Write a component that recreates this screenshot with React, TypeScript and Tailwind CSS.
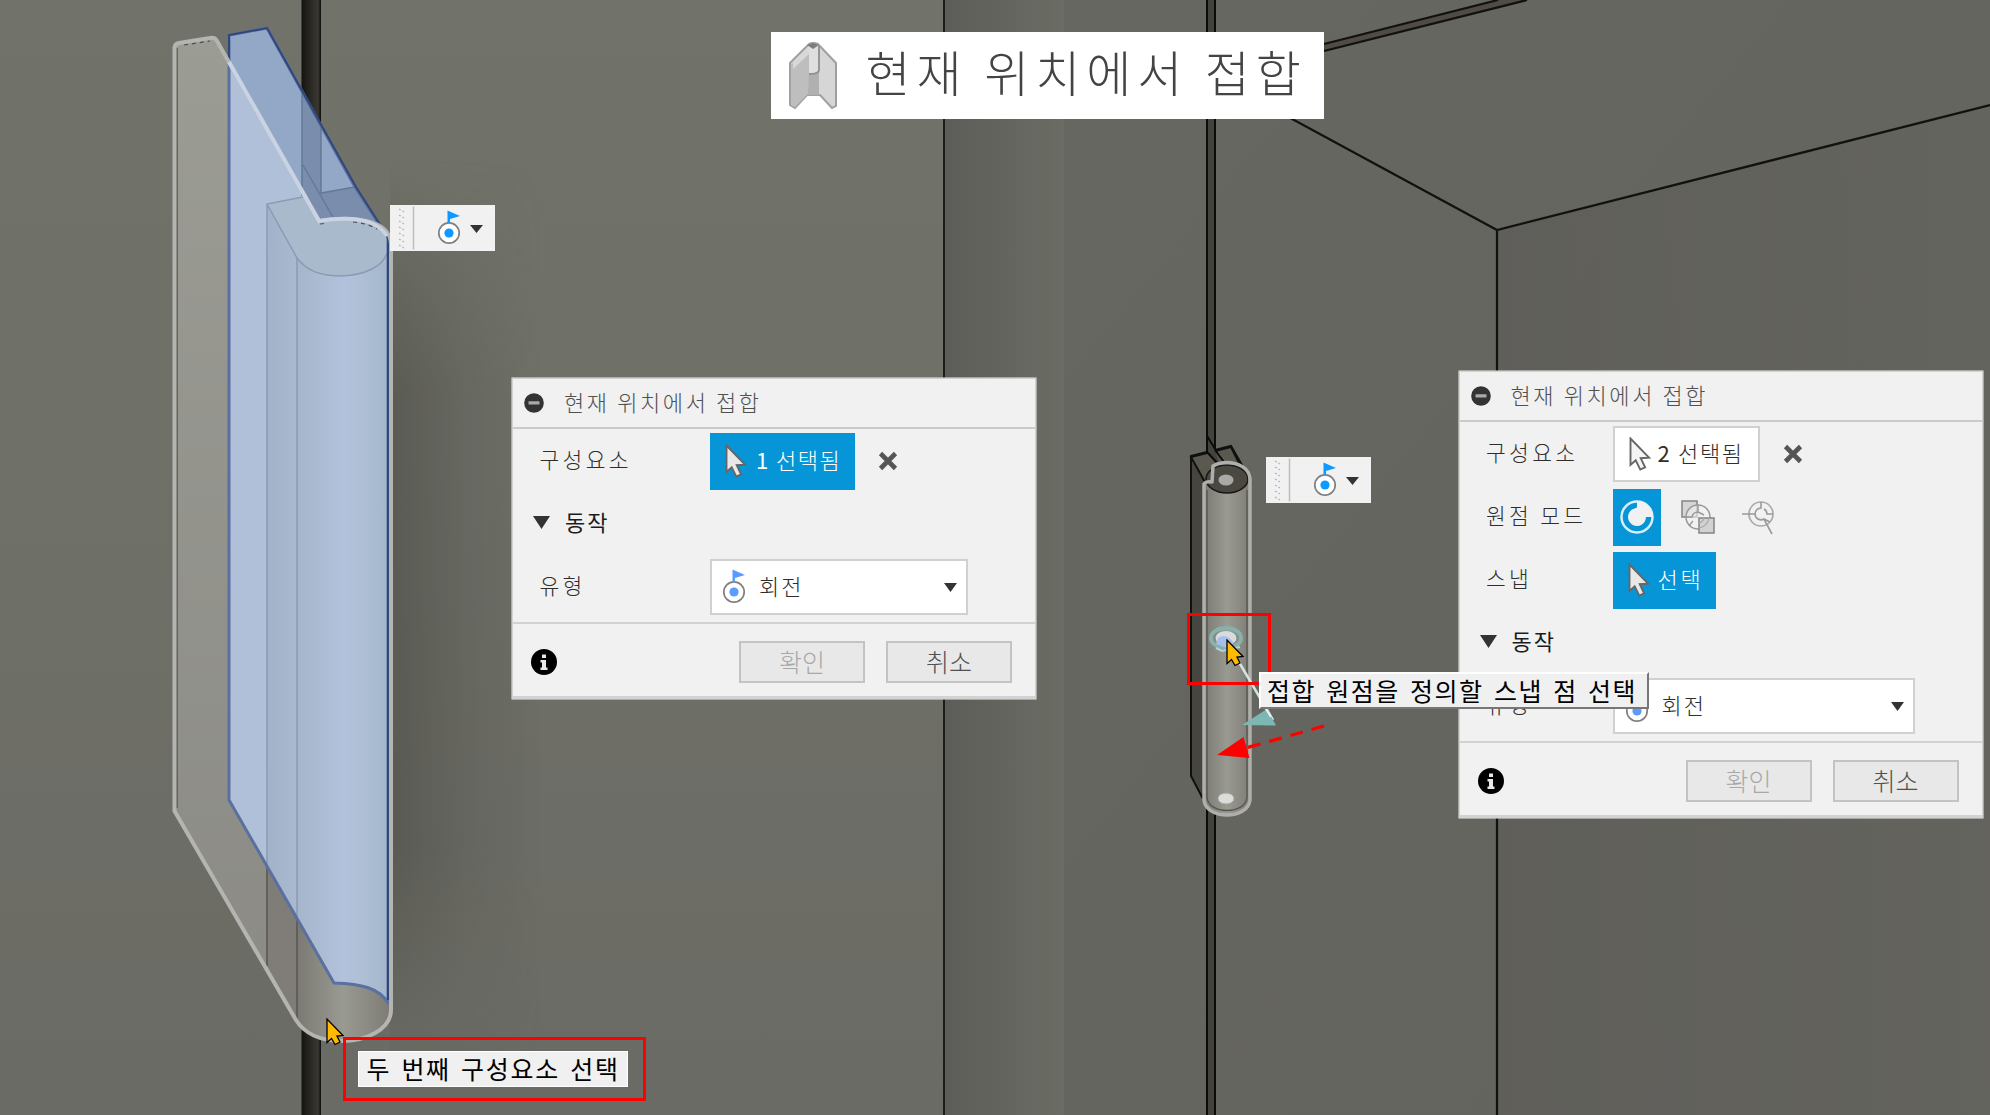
import type { ReactNode } from 'react';

const FONT = "font-['Noto_Sans_CJK_KR','Noto_Sans_CJK_SC',sans-serif]";

function SelectArrow({ fill }: { fill: string }) {
  return (
    <svg width="22" height="34" viewBox="0 0 22 34" className="shrink-0">
      <path d="M1.5 1.5V28l5.2-4.6 4.6 9.2 4.8-2.2-4.4-9.2 8.3-.6Z" fill={fill} stroke="#666" strokeWidth="1.9" />
    </svg>
  );
}

function YellowCursor() {
  return <path d="M0 0V23.500L4.500 19.500L8 25.500L13 23L10 17L16 16.500Z" fill="#ffba00" stroke="#000" strokeWidth="1.300" />;
}

function RevoluteIcon({ flag }: { flag: string }) {
  return (
    <svg width="24" height="36" viewBox="0 0 24 36" className="shrink-0">
      <circle cx="12" cy="23" r="10.200" fill="#fff" stroke="#808080" strokeWidth="1.700" />
      <circle cx="12" cy="23" r="4.600" fill={flag} />
      <path d="M10.500 13V0.500L23 6L13 9V13Z" fill={flag} />
    </svg>
  );
}

function Caret({ w = 12, h = 9 }: { w?: number; h?: number }) {
  return (
    <svg width={w} height={h} viewBox="0 0 12 9" preserveAspectRatio="none" className="shrink-0">
      <path d="M0 0H12L6 9Z" fill="#333" />
    </svg>
  );
}

function CrossIcon() {
  return (
    <svg width="20" height="20" viewBox="0 0 20 20">
      <path d="M2.500 2.500L17.500 17.500M17.500 2.500L2.500 17.500" stroke="#555" strokeWidth="4.600" />
    </svg>
  );
}

function Toolbar({ place }: { place: string }) {
  return (
    <div className={`absolute flex h-[46px] w-[105px] items-center bg-[#f1f1f1] ${place}`}>
      <svg width="26" height="46" viewBox="0 0 26 46" className="shrink-0">
        <path d="M9 4l5 3M9 10l5 3M9 16l5 3M9 22l5 3M9 28l5 3M9 34l5 3M9 40l5 3" stroke="#b5b5b5" strokeWidth="1.300" strokeDasharray="2 2" />
        <path d="M23.500 1.500V44.500" stroke="#bdbdbd" strokeWidth="1.500" />
      </svg>
      <div className="ml-[20.500px] flex items-center">
        <RevoluteIcon flag="#0d99ff" />
        <span className="ml-[9px] mt-0.5"><Caret w={13} h={8} /></span>
      </div>
    </div>
  );
}

function Row({ label, labelWidth, children }: { label: string; labelWidth: string; children: ReactNode }) {
  return (
    <div className="flex h-[63px] items-center">
      <div className={`shrink-0 pb-[5px] pl-[26.500px] text-[21.500px] font-light tracking-[3.300px] text-[#2e2e2e] ${labelWidth}`}>{label}</div>
      {children}
    </div>
  );
}

function Section() {
  return (
    <div className="flex h-[63px] items-center pb-[3px] pl-[20px]">
      <Caret w={17} h={13} />
      <span className="ml-[15px] pb-[3px] text-[22px] tracking-[2px] text-[#1c1c1c]">동작</span>
    </div>
  );
}

function Dialog({ place, children }: { place: string; children: ReactNode }) {
  return (
    <div className={`absolute flex w-[524px] flex-col border border-b-[3px] border-[#d2d2d2] bg-[#f1f1f1] shadow-[0_0_0_0.5px_#eee] ${place}`}>
      <div className="flex h-[50px] shrink-0 items-center border-b-2 border-[#cbcbcb] pl-[11px] pt-px">
        <svg width="20" height="20" viewBox="0 0 20 20">
          <circle cx="10" cy="10" r="9.800" fill="#333" />
          <rect x="4.500" y="8.200" width="11" height="3.200" rx="0.500" fill="#aaa" />
        </svg>
        <span className="ml-5 pb-[4px] text-[22px] font-light tracking-[2.600px] text-[#505050]">현재 위치에서 접합</span>
      </div>
      <div className="flex flex-1 flex-col pt-px">{children}</div>
      <div className="flex h-[74px] shrink-0 items-center border-t-2 border-[#d2d2d2] pl-[18px] pr-[23px] pt-[3px]">
        <svg width="26" height="26" viewBox="0 0 26 26">
          <circle cx="13" cy="13" r="13" fill="#000" />
          <path d="M11 5.500h4v3.500h-4zM9.500 11h5.500v7.500h1.500v2.500h-7v-2.500h1.500v-5h-1.500z" fill="#e8e8e8" />
        </svg>
        <div className="ml-auto flex gap-[21px]">
          <div className="flex h-[42px] w-[126px] items-center justify-center border-2 border-[#c3c3c3] bg-[#e8e8e8] pb-px text-[25px] font-light text-[#a8a8a8]">확인</div>
          <div className="flex h-[42px] w-[126px] items-center justify-center border-2 border-[#c3c3c3] bg-[#e8e8e8] pb-px text-[25px] font-light text-[#505050]">취소</div>
        </div>
      </div>
    </div>
  );
}

function TypeSelect({ width }: { width: string }) {
  return (
    <div className={`flex h-[56px] items-center border-2 border-[#d0d0d0] bg-white pl-[10px] pr-[9px] ${width}`}>
      <RevoluteIcon flag="#5b9bff" />
      <span className="ml-[13px] pb-[5px] text-[22px] font-light tracking-[2px] text-[#2e2e2e]">회전</span>
      <span className="ml-auto"><Caret w={13} h={9} /></span>
    </div>
  );
}

function Scene() {
  return (
    <svg width="1990" height="1115" viewBox="0 0 1990 1115" className="absolute inset-0">
      <defs>
        <linearGradient id="wall" x1="0" y1="0" x2="0" y2="1">
          <stop offset="0" stopColor="#717269" />
          <stop offset="0.5" stopColor="#6e6f67" />
          <stop offset="1" stopColor="#6b6b65" />
        </linearGradient>
        <linearGradient id="side" x1="0" x2="1" y1="0" y2="0">
          <stop offset="0" stopColor="#5c5d58" />
          <stop offset="1" stopColor="#6b6c64" />
        </linearGradient>
        <linearGradient id="right" x1="0" x2="1" y1="0" y2="1">
          <stop offset="0" stopColor="#666760" />
          <stop offset="1" stopColor="#64635e" />
        </linearGradient>
        <linearGradient id="box" x1="0" x2="1" y1="0" y2="0">
          <stop offset="0" stopColor="#5c5b57" />
          <stop offset="1" stopColor="#64645e" />
        </linearGradient>
        <linearGradient id="gap" x1="0" x2="1" y1="0" y2="0">
          <stop offset="0" stopColor="#11110f" />
          <stop offset="0.15" stopColor="#1c1b18" />
          <stop offset="0.85" stopColor="#3a3832" />
          <stop offset="1" stopColor="#0c0c0b" />
        </linearGradient>
        <linearGradient id="cast" x1="0" x2="1" y1="0" y2="0">
          <stop offset="0" stopColor="#50504a" stopOpacity="0.65" />
          <stop offset="0.5" stopColor="#50504a" stopOpacity="0.25" />
          <stop offset="1" stopColor="#50504a" stopOpacity="0" />
        </linearGradient>
        <linearGradient id="castfade" x1="0" x2="0" y1="0" y2="1">
          <stop offset="0" stopColor="#000" />
          <stop offset="0.25" stopColor="#fff" />
          <stop offset="0.75" stopColor="#fff" />
          <stop offset="1" stopColor="#000" />
        </linearGradient>
        <mask id="castmask"><rect x="0" y="160" width="600" height="920" fill="url(#castfade)" /></mask>
        <linearGradient id="plate" x1="0" x2="0" y1="0" y2="1">
          <stop offset="0" stopColor="#9b9c94" />
          <stop offset="1" stopColor="#8b8a85" />
        </linearGradient>
        <linearGradient id="roll" x1="0" x2="1" y1="0" y2="0">
          <stop offset="0" stopColor="#7b7973" />
          <stop offset="0.5" stopColor="#999a92" />
          <stop offset="1" stopColor="#7f7c76" />
        </linearGradient>
        <linearGradient id="blueroll" x1="0" x2="1" y1="0" y2="0">
          <stop offset="0" stopColor="#a5b5cb" />
          <stop offset="0.5" stopColor="#b2c2dc" />
          <stop offset="0.7" stopColor="#aebfd6" />
          <stop offset="1" stopColor="#a3b5cb" />
        </linearGradient>
        <linearGradient id="bluestep" x1="0" x2="1" y1="0" y2="0">
          <stop offset="0" stopColor="#a2b2c8" />
          <stop offset="1" stopColor="#a9b9d0" />
        </linearGradient>
        <clipPath id="blueclip"><path d="M229 35L267 28L355 187L388 238V1003C379 988 362 984 334 983L229 800Z" /></clipPath>
      </defs>
      <rect width="1064" height="1115" fill="url(#wall)" />
      <rect x="944" width="121" height="1115" fill="url(#side)" />
      <rect x="1064" width="926" height="1115" fill="url(#right)" />
      <path d="M944 0V1115" stroke="#1c1c1a" strokeWidth="2" />
      <rect x="301.500" width="19.500" height="1115" fill="url(#gap)" />
      <rect x="390" y="160" width="150" height="920" fill="url(#cast)" mask="url(#castmask)" />

      <path d="M175 45L211 39Q215 38 217 42L319 221C350 218 391 222 391 250V1010C391 1030 365 1040 342 1040C320 1040 303 1032 296 1020L175 811Z" fill="url(#plate)" />
      <path d="M267 400H388V1010C388 1030 320 1060 296 1020L267 966Z" fill="#807d78" />
      <path d="M297 400H389V1010C389 1050 308 1045 297 1022Z" fill="url(#roll)" />
      <path d="M177 48V808M267 860V966M297 900V1019" stroke="#555550" strokeWidth="1.500" fill="none" />

      <g clipPath="url(#blueclip)">
        <rect x="225" y="20" width="170" height="990" fill="#b0c0d9" />
        <path d="M229 28H268L388 240V260L319 221L229 62Z" fill="#93a8c7" />
        <path d="M302 60V190L319 221L388 240V230L355 187L321 193V60Z" fill="#7a8dac" />
        <path d="M321 100V193L356 187L300 80Z" fill="#93a8c7" />
        <path d="M267 204L297 258V1000H267Z" fill="url(#bluestep)" />
        <path d="M297 250H390V1010H297Z" fill="url(#blueroll)" />
        <path d="M267 204L303 197L319 221C350 218 375 220 388 240V253C383 266 366 275 342 276C320 276 307 271 297 258Z" fill="#a9bacc" />
        <path d="M303 197L267 204L297 258C307 271 320 276 342 276C366 275 383 266 387 253M267 204V990M297 258V990" fill="none" stroke="#8b9bb3" strokeWidth="1.500" />
        <path d="M302 90V196M321 122V193L355 187M303 165L334 219" fill="none" stroke="#647899" strokeWidth="1.500" />
      </g>
      <path d="M229 35L267 28L355 187L388 238V1003C379 988 362 984 334 983L229 800Z" fill="none" stroke="#5a70a0" strokeWidth="3" strokeLinejoin="round" />
      <path d="M229 60V35L267 28L356 187L388 237V1000" fill="none" stroke="#30477b" strokeWidth="2" />
      <path d="M174.500 47Q175 44 179 43L210 38Q215 37 217 41L319 221C350 216 390 218 391 244V1010C391 1030 365 1041 342 1041C320 1041 304 1033 296 1020L174.500 811Z" fill="none" stroke="#b4b4b1" strokeWidth="4" />
      <path d="M229 62L319 221C350 216 376 219 387 236" fill="none" stroke="#c8d3e3" strokeWidth="4" />
      <path d="M184 45L210 41M320 224L328 223M353 222C363 223 370 225 377 229" fill="none" stroke="#50504b" strokeWidth="1.200" strokeDasharray="4 4" />
      <g transform="translate(327 1019)"><YellowCursor /></g>

      <path d="M1497 230L1990 105V1115H1497Z" fill="url(#box)" opacity="0.65" />
      <path d="M1324 44L1498 0H1527L1324 51Z" fill="#504c44" />
      <path d="M1324 44L1498 0M1324 51L1527 0M1270 107L1497 230L1990 105M1497 230V1115" fill="none" stroke="#11110f" strokeWidth="2.200" />
      <rect x="1206.500" width="9" height="1115" fill="#44423d" />
      <path d="M1207 0V1115M1215 0V1115" stroke="#0b0b0a" strokeWidth="2" />

      <path d="M1191 456L1231 446L1242 465V780H1210L1202 797L1191 776Z" fill="#47453f" stroke="#10100e" strokeWidth="2" />
      <path d="M1191 457L1231 447L1240 465L1206 484Z" fill="#5b5850" stroke="#10100e" strokeWidth="2" />
      <path d="M1207 435V452L1220 466L1215 450Z" fill="#44423d" />
      <path d="M1207 435V452L1220 466M1207 436L1217 452M1215 450L1224 462" stroke="#0b0b0a" strokeWidth="2" fill="none" />
      <path d="M1204 485L1212 481L1213 466C1223 459 1250 462 1250 480V800C1248 820 1206 820 1204 800Z" fill="url(#roll)" />
      <ellipse cx="1227" cy="479" rx="21" ry="14" fill="#4b4841" stroke="#171714" strokeWidth="1.500" />
      <ellipse cx="1226" cy="480" rx="7.500" ry="5.500" fill="#aaa9a6" />
      <path d="M1207 490V797C1208 815 1246 815 1247 797V490" fill="none" stroke="#55544f" strokeWidth="1.300" />
      <path d="M1204 484Q1206 481 1212 482L1213 466C1223 459 1250 462 1250 480V800C1248 820 1206 820 1204 800Z" fill="none" stroke="#aeaeab" strokeWidth="3.500" strokeLinejoin="round" />
      <ellipse cx="1226" cy="798.500" rx="8" ry="5.500" fill="#dcdcda" stroke="#a6a6a3" />
      <ellipse cx="1226" cy="638" rx="15" ry="10" fill="none" stroke="#86b1ad" strokeWidth="4" />
      <ellipse cx="1226" cy="638" rx="10.500" ry="7" fill="#d9dcdf" />
      <path d="M1218 638Q1226 632 1234 643L1227 648L1216 644Z" fill="#a7c0ea" />
      <path d="M1216 648L1222 651L1240 647" fill="none" stroke="#b5d2cf" strokeWidth="2" />
      <path d="M1236 657L1273 720" stroke="#d5e4e2" strokeWidth="2.500" />
      <path d="M1242 725L1267 709L1276 725.500Z" fill="#7db7b3" />
      <path d="M1266 709l5 8" stroke="#e4f0ef" strokeWidth="2" />
      <path d="M1324 726L1246 748" stroke="#f00" strokeWidth="3.300" strokeDasharray="13 9" />
      <path d="M1217 755L1243.500 737L1249.500 758Z" fill="#f00" />
    </svg>
  );
}

export default function App() {
  return (
    <div className={`relative h-[1115px] w-[1990px] overflow-hidden leading-none ${FONT}`}>
      <Scene />

      <div className="absolute left-[770.500px] top-[32px] flex h-[87px] w-[553px] items-center bg-white pl-[18px]">
        <svg width="49" height="68" viewBox="0 0 49 68" className="shrink-0">
          <path d="M1 21L20 2Q24 0 29 2L47 21V64L43 66L31 53H18L6 66L1 63Z" fill="#d6d6d6" stroke="#a0a0a0" strokeWidth="2" />
          <path d="M2 22L20 12V51L6 65L2 62Z" fill="#bebebe" />
          <path d="M4 20L20 4V12L4 27Z" fill="#d8d8d8" />
          <path d="M20 30H30V53H19Z" fill="#b0b0b0" />
          <path d="M20 4H29V28L27 31H20Z" fill="#dfdfdf" />
          <path d="M30 4V28Q30 32 20 32" fill="none" stroke="#909090" strokeWidth="1.800" />
          <path d="M18 3L24 7L30 3L24 1Z" fill="#7d7d7d" />
        </svg>
        <span className="ml-[28px] whitespace-nowrap pb-[11px] text-[49px] font-light tracking-[5.900px] text-[#444]">현재 위치에서 접합</span>
      </div>

      <Toolbar place="left-[390px] top-[204.500px]" />
      <Toolbar place="left-[1266px] top-[456.500px]" />

      <Dialog place="left-[512px] top-[377.500px] h-[321.500px]">
        <Row label="구성요소" labelWidth="w-[197px]">
          <div className="flex h-[57px] w-[145px] items-center bg-[#0696d7] pl-[15px]">
            <SelectArrow fill="#e8e8e8" />
            <span className="ml-[9px] whitespace-nowrap pb-[4px] text-[22px] font-light tracking-[1.500px] text-white"><span className="font-normal">1</span> 선택됨</span>
          </div>
          <span className="ml-[23px]"><CrossIcon /></span>
        </Row>
        <Section />
        <Row label="유형" labelWidth="w-[197px]">
          <TypeSelect width="w-[258px]" />
        </Row>
      </Dialog>

      <Dialog place="left-[1458.500px] top-[370.500px] h-[447.500px]">
        <Row label="구성요소" labelWidth="w-[153px]">
          <div className="flex h-[56px] w-[147px] items-center border-2 border-[#d0d0d0] bg-white pl-[14px]">
            <SelectArrow fill="#f4f4f4" />
            <span className="ml-[7px] whitespace-nowrap pb-[4px] text-[22px] font-light tracking-[1.700px] text-[#2e2e2e]"><span className="font-normal">2</span> 선택됨</span>
          </div>
          <span className="ml-[23px]"><CrossIcon /></span>
        </Row>
        <Row label="원점 모드" labelWidth="w-[153px]">
          <div className="flex h-[57px] w-[48px] items-center justify-center bg-[#0696d7]">
            <svg width="36" height="36" viewBox="0 0 36 36">
              <circle cx="18" cy="18" r="15.500" fill="none" stroke="#d8eef9" strokeWidth="2.500" />
              <path d="M18 2A16 16 0 0 1 34 18H27A9 9 0 1 1 13 10.500L18 8.500Z" fill="#f1f1f1" />
            </svg>
          </div>
          <svg width="36" height="36" viewBox="0 0 36 36" className="ml-[19px]">
            <path d="M2 2H17V18H2Z" fill="#d5d5d5" stroke="#848484" strokeWidth="1.500" />
            <circle cx="18" cy="18" r="12" fill="#f1f1f1" fillOpacity="0.6" stroke="#999" strokeWidth="1.500" />
            <path d="M18 6V13A6 6 0 0 0 12 18H6M13 22Q11 24 9 27M18 13l6 3" fill="none" stroke="#999" strokeWidth="1.500" />
            <path d="M19 19H34V34H19Z" fill="#d2d2d2" stroke="#848484" strokeWidth="1.500" />
            <path d="M19 29A12 12 0 0 0 29 19M19 24Q23 23 24 19" fill="none" stroke="#aaa" strokeWidth="1.200" />
          </svg>
          <svg width="36" height="36" viewBox="0 0 36 36" className="ml-[24px]">
            <circle cx="21" cy="15" r="12" fill="none" stroke="#aaa" strokeWidth="1.700" />
            <path d="M2 15H15A6 6 0 0 1 21 9V3M24 10A6 6 0 0 1 27 15H33M15 15A6 6 0 0 0 24 20L32 35M24 20L30 23" fill="none" stroke="#999" strokeWidth="1.600" />
          </svg>
        </Row>
        <Row label="스냅" labelWidth="w-[153px]">
          <div className="flex h-[57px] w-[103px] items-center bg-[#0696d7] pl-[15px]">
            <SelectArrow fill="#e8e8e8" />
            <span className="ml-[8px] pb-[5px] text-[22px] font-light tracking-[2.800px] text-white">선택</span>
          </div>
        </Row>
        <Section />
        <Row label="유형" labelWidth="w-[153px]">
          <TypeSelect width="w-[302px]" />
        </Row>
      </Dialog>

      <div className="absolute left-[1187px] top-[612.500px] h-[72px] w-[84px] border-[3px] border-[#f00]" />
      <div className="absolute left-[343px] top-[1037px] flex h-[64px] w-[303px] items-center border-[3px] border-[#f00] pl-[12px]">
        <div className="flex h-[36px] w-[270px] items-center justify-center whitespace-nowrap border border-white bg-[#f0f0f0] pb-[2px] text-[25px] tracking-[1.700px] text-black [word-spacing:3px]">두 번째 구성요소 선택</div>
      </div>
      <div className="absolute left-[1259px] top-[672px] flex h-[37px] w-[390px] items-center whitespace-nowrap border-2 border-l-white border-t-white border-[#777] bg-[#f0f0f0] pb-px pl-[6px] text-[25px] tracking-[1.500px] text-black [word-spacing:3.200px]">접합 원점을 정의할 스냅 점 선택</div>
      <svg width="18" height="28" viewBox="-1 -1 18 28" className="absolute left-[1226px] top-[639px]"><YellowCursor /></svg>
    </div>
  );
}
